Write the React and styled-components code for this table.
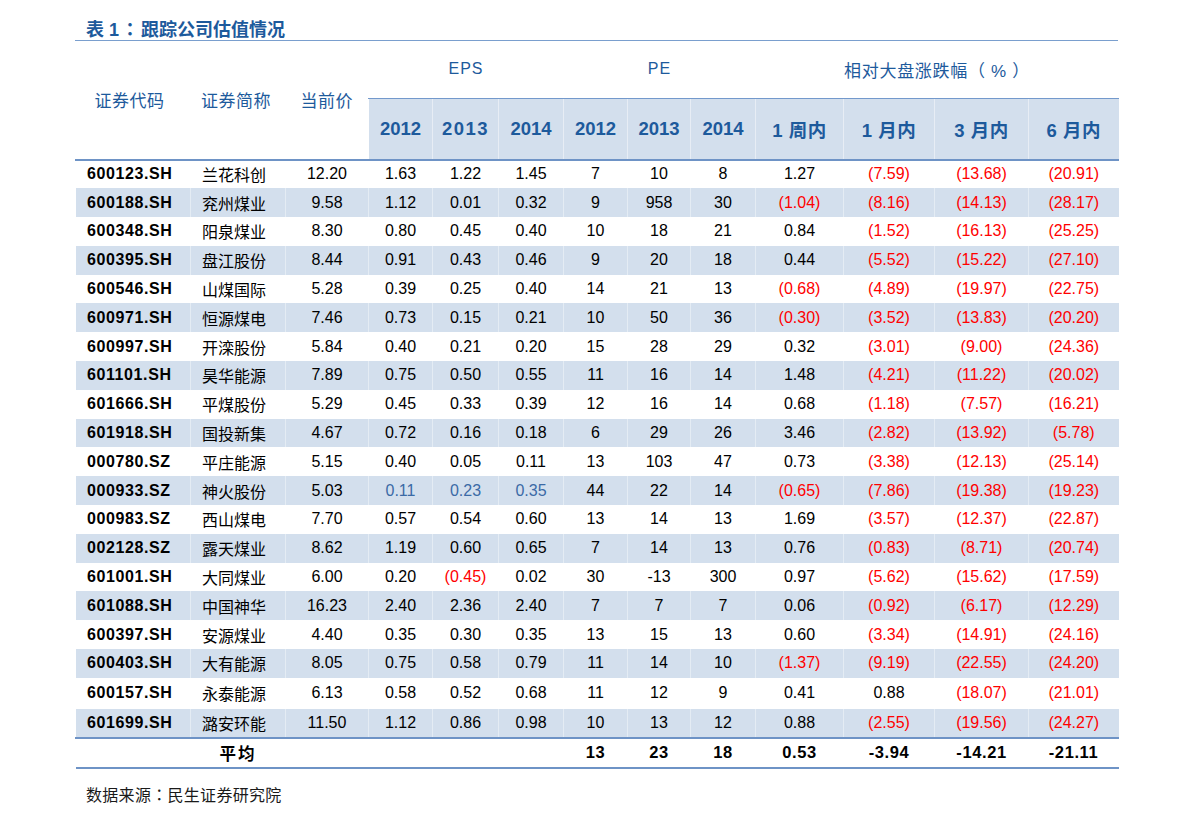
import React from "react";
import styled, { createGlobalStyle } from "styled-components";

const GlobalStyle = createGlobalStyle`
  body {
    margin: 0;
    background: #ffffff;
    font-family: "Liberation Sans", "Noto Sans CJK SC", sans-serif;
  }
`;

const Page = styled.div`
  width: 1043px;
  padding-left: 75px;
`;

const Title = styled.div`
  height: 40.5px;
  box-sizing: border-box;
  padding: 18px 0 0 11px;
  font-size: 18px;
  line-height: 20px;
  font-weight: bold;
  color: #1d5a9c;
  border-bottom: 1.5px solid #7a9fce;
`;

// centred full-width colon, as in the printed report
const Punct = styled.span`
  font-family: "Noto Sans CJK TC", "Noto Sans CJK SC", sans-serif;
  margin: 0 ${(p) => p.$gap || 0}px;
`;

const Table = styled.table`
  width: 1043px;
  border-collapse: collapse;
  table-layout: fixed;
  font-size: 16px;
`;

const GroupHead = styled.th`
  height: 57px;
  padding: 0;
  font-weight: normal;
  font-size: ${(p) => (p.$cjk ? "17px" : "16px")};
  letter-spacing: ${(p) => (p.$cjk ? "0.7px" : "1px")};
  color: #1d5a9c;
  text-align: center;
  vertical-align: middle;
  white-space: pre;
`;

const SideHead = styled.th`
  padding: 0 ${(p) => p.$shift || 0}px 0 0;
  font-weight: normal;
  font-size: 17px;
  letter-spacing: 0.5px;
  color: #1d5a9c;
  text-align: center;
  vertical-align: middle;
  border-bottom: 2px solid #6e93c6;
`;

const SubHead = styled.th`
  height: 60px;
  padding: 0;
  font-size: 18.5px;
  font-weight: bold;
  letter-spacing: ${(p) => p.$spacing || 0}px;
  color: #1d5a9c;
  text-align: center;
  background: #d3dfed;
  border-top: 1.5px solid #7399cc;
  border-bottom: 2px solid #6e93c6;
  border-left: 1px solid rgba(255, 255, 255, 0.45);
`;

const Row = styled.tr`
  height: ${(p) => p.$h}px;
  background: ${(p) => (p.$shade ? "#d3dfed" : "#ffffff")};
`;

const Cell = styled.td`
  padding: ${(p) => (p.$left ? "0 0 0 11px" : "0")};
  text-align: ${(p) => (p.$left ? "left" : "center")};
  color: ${(p) => (p.$tone === "red" ? "#ff0000" : p.$tone === "blue" ? "#3b6aa6" : "#000000")};
  font-weight: ${(p) => (p.$bold ? "bold" : "normal")};
  letter-spacing: ${(p) => (p.$bold ? "0.6px" : "0")};
  white-space: nowrap;
  border-left: 1px solid rgba(255, 255, 255, 0.4);
`;

const AvgRow = styled.tr`
  height: 30px;
  border-top: 2px solid #6e93c6;
  border-bottom: 2px solid #6e93c6;
`;

const AvgCell = styled.td`
  padding: 0;
  text-align: center;
  font-weight: bold;
  font-size: 16.5px;
  letter-spacing: ${(p) => (p.$cjk ? "2px" : "0.6px")};
  color: #000000;
`;

const Source = styled.div`
  padding: 16px 0 0 11px;
  font-size: 16px;
  line-height: 18px;
  letter-spacing: 0.3px;
  color: #1a1a1a;
`;

const widths = [115, 95, 83, 64, 66, 65, 64, 63, 65, 88, 91, 94, 90];

const rows = [
  ["600123.SH", "兰花科创", "12.20", "1.63", "1.22", "1.45", "7", "10", "8", "1.27", "(7.59)", "(13.68)", "(20.91)"],
  ["600188.SH", "兖州煤业", "9.58", "1.12", "0.01", "0.32", "9", "958", "30", "(1.04)", "(8.16)", "(14.13)", "(28.17)"],
  ["600348.SH", "阳泉煤业", "8.30", "0.80", "0.45", "0.40", "10", "18", "21", "0.84", "(1.52)", "(16.13)", "(25.25)"],
  ["600395.SH", "盘江股份", "8.44", "0.91", "0.43", "0.46", "9", "20", "18", "0.44", "(5.52)", "(15.22)", "(27.10)"],
  ["600546.SH", "山煤国际", "5.28", "0.39", "0.25", "0.40", "14", "21", "13", "(0.68)", "(4.89)", "(19.97)", "(22.75)"],
  ["600971.SH", "恒源煤电", "7.46", "0.73", "0.15", "0.21", "10", "50", "36", "(0.30)", "(3.52)", "(13.83)", "(20.20)"],
  ["600997.SH", "开滦股份", "5.84", "0.40", "0.21", "0.20", "15", "28", "29", "0.32", "(3.01)", "(9.00)", "(24.36)"],
  ["601101.SH", "昊华能源", "7.89", "0.75", "0.50", "0.55", "11", "16", "14", "1.48", "(4.21)", "(11.22)", "(20.02)"],
  ["601666.SH", "平煤股份", "5.29", "0.45", "0.33", "0.39", "12", "16", "14", "0.68", "(1.18)", "(7.57)", "(16.21)"],
  ["601918.SH", "国投新集", "4.67", "0.72", "0.16", "0.18", "6", "29", "26", "3.46", "(2.82)", "(13.92)", "(5.78)"],
  ["000780.SZ", "平庄能源", "5.15", "0.40", "0.05", "0.11", "13", "103", "47", "0.73", "(3.38)", "(12.13)", "(25.14)"],
  ["000933.SZ", "神火股份", "5.03", "0.11", "0.23", "0.35", "44", "22", "14", "(0.65)", "(7.86)", "(19.38)", "(19.23)"],
  ["000983.SZ", "西山煤电", "7.70", "0.57", "0.54", "0.60", "13", "14", "13", "1.69", "(3.57)", "(12.37)", "(22.87)"],
  ["002128.SZ", "露天煤业", "8.62", "1.19", "0.60", "0.65", "7", "14", "13", "0.76", "(0.83)", "(8.71)", "(20.74)"],
  ["601001.SH", "大同煤业", "6.00", "0.20", "(0.45)", "0.02", "30", "-13", "300", "0.97", "(5.62)", "(15.62)", "(17.59)"],
  ["601088.SH", "中国神华", "16.23", "2.40", "2.36", "2.40", "7", "7", "7", "0.06", "(0.92)", "(6.17)", "(12.29)"],
  ["600397.SH", "安源煤业", "4.40", "0.35", "0.30", "0.35", "13", "15", "13", "0.60", "(3.34)", "(14.91)", "(24.16)"],
  ["600403.SH", "大有能源", "8.05", "0.75", "0.58", "0.79", "11", "14", "10", "(1.37)", "(9.19)", "(22.55)", "(24.20)"],
  ["600157.SH", "永泰能源", "6.13", "0.58", "0.52", "0.68", "11", "12", "9", "0.41", "0.88", "(18.07)", "(21.01)"],
  ["601699.SH", "潞安环能", "11.50", "1.12", "0.86", "0.98", "10", "13", "12", "0.88", "(2.55)", "(19.56)", "(24.27)"],
];

// 000933.SZ has its EPS figures printed in blue
const blueRow = "000933.SZ";

const rowHeight = (i) => (i === 18 ? 31 : i === 19 ? 29 : 28.8);

const toneOf = (value, code, col) => {
  if (value.startsWith("(")) return "red";
  if (code === blueRow && col >= 3 && col <= 5) return "blue";
  return "black";
};

const App = () => {
  return (
    <Page>
      <GlobalStyle />
      <Title>
        表 1<Punct $gap={2}>：</Punct>跟踪公司估值情况
      </Title>
      <Table>
        <colgroup>
          {widths.map((w, i) => (
            <col key={i} style={{ width: w }} />
          ))}
        </colgroup>
        <thead>
          <tr>
            <SideHead rowSpan={2} $shift={7}>证券代码</SideHead>
            <SideHead rowSpan={2} $shift={4}>证券简称</SideHead>
            <SideHead rowSpan={2}>当前价</SideHead>
            <GroupHead colSpan={3}>EPS</GroupHead>
            <GroupHead colSpan={3}>PE</GroupHead>
            <GroupHead colSpan={4} $cjk>相对大盘涨跌幅（ % ）</GroupHead>
          </tr>
          <tr>
            <SubHead>2012</SubHead>
            <SubHead $spacing={1.5}>2013</SubHead>
            <SubHead>2014</SubHead>
            <SubHead>2012</SubHead>
            <SubHead>2013</SubHead>
            <SubHead>2014</SubHead>
            <SubHead $spacing={0.5}>1 周内</SubHead>
            <SubHead $spacing={0.5}>1 月内</SubHead>
            <SubHead $spacing={0.5}>3 月内</SubHead>
            <SubHead $spacing={0.5}>6 月内</SubHead>
          </tr>
        </thead>
        <tbody>
          {rows.map((r, i) => (
            <Row key={r[0]} $shade={i % 2 === 1} $h={rowHeight(i)}>
              {r.map((v, c) => (
                <Cell
                  key={c}
                  $left={c < 2}
                  $bold={c === 0}
                  $tone={toneOf(v, r[0], c)}
                >
                  {v}
                </Cell>
              ))}
            </Row>
          ))}
          <AvgRow>
            <AvgCell />
            <AvgCell $cjk>平均</AvgCell>
            <AvgCell />
            <AvgCell />
            <AvgCell />
            <AvgCell />
            <AvgCell>13</AvgCell>
            <AvgCell>23</AvgCell>
            <AvgCell>18</AvgCell>
            <AvgCell>0.53</AvgCell>
            <AvgCell>-3.94</AvgCell>
            <AvgCell>-14.21</AvgCell>
            <AvgCell>-21.11</AvgCell>
          </AvgRow>
        </tbody>
      </Table>
      <Source>
        数据来源<Punct>：</Punct>民生证券研究院
      </Source>
    </Page>
  );
};

export default App;
